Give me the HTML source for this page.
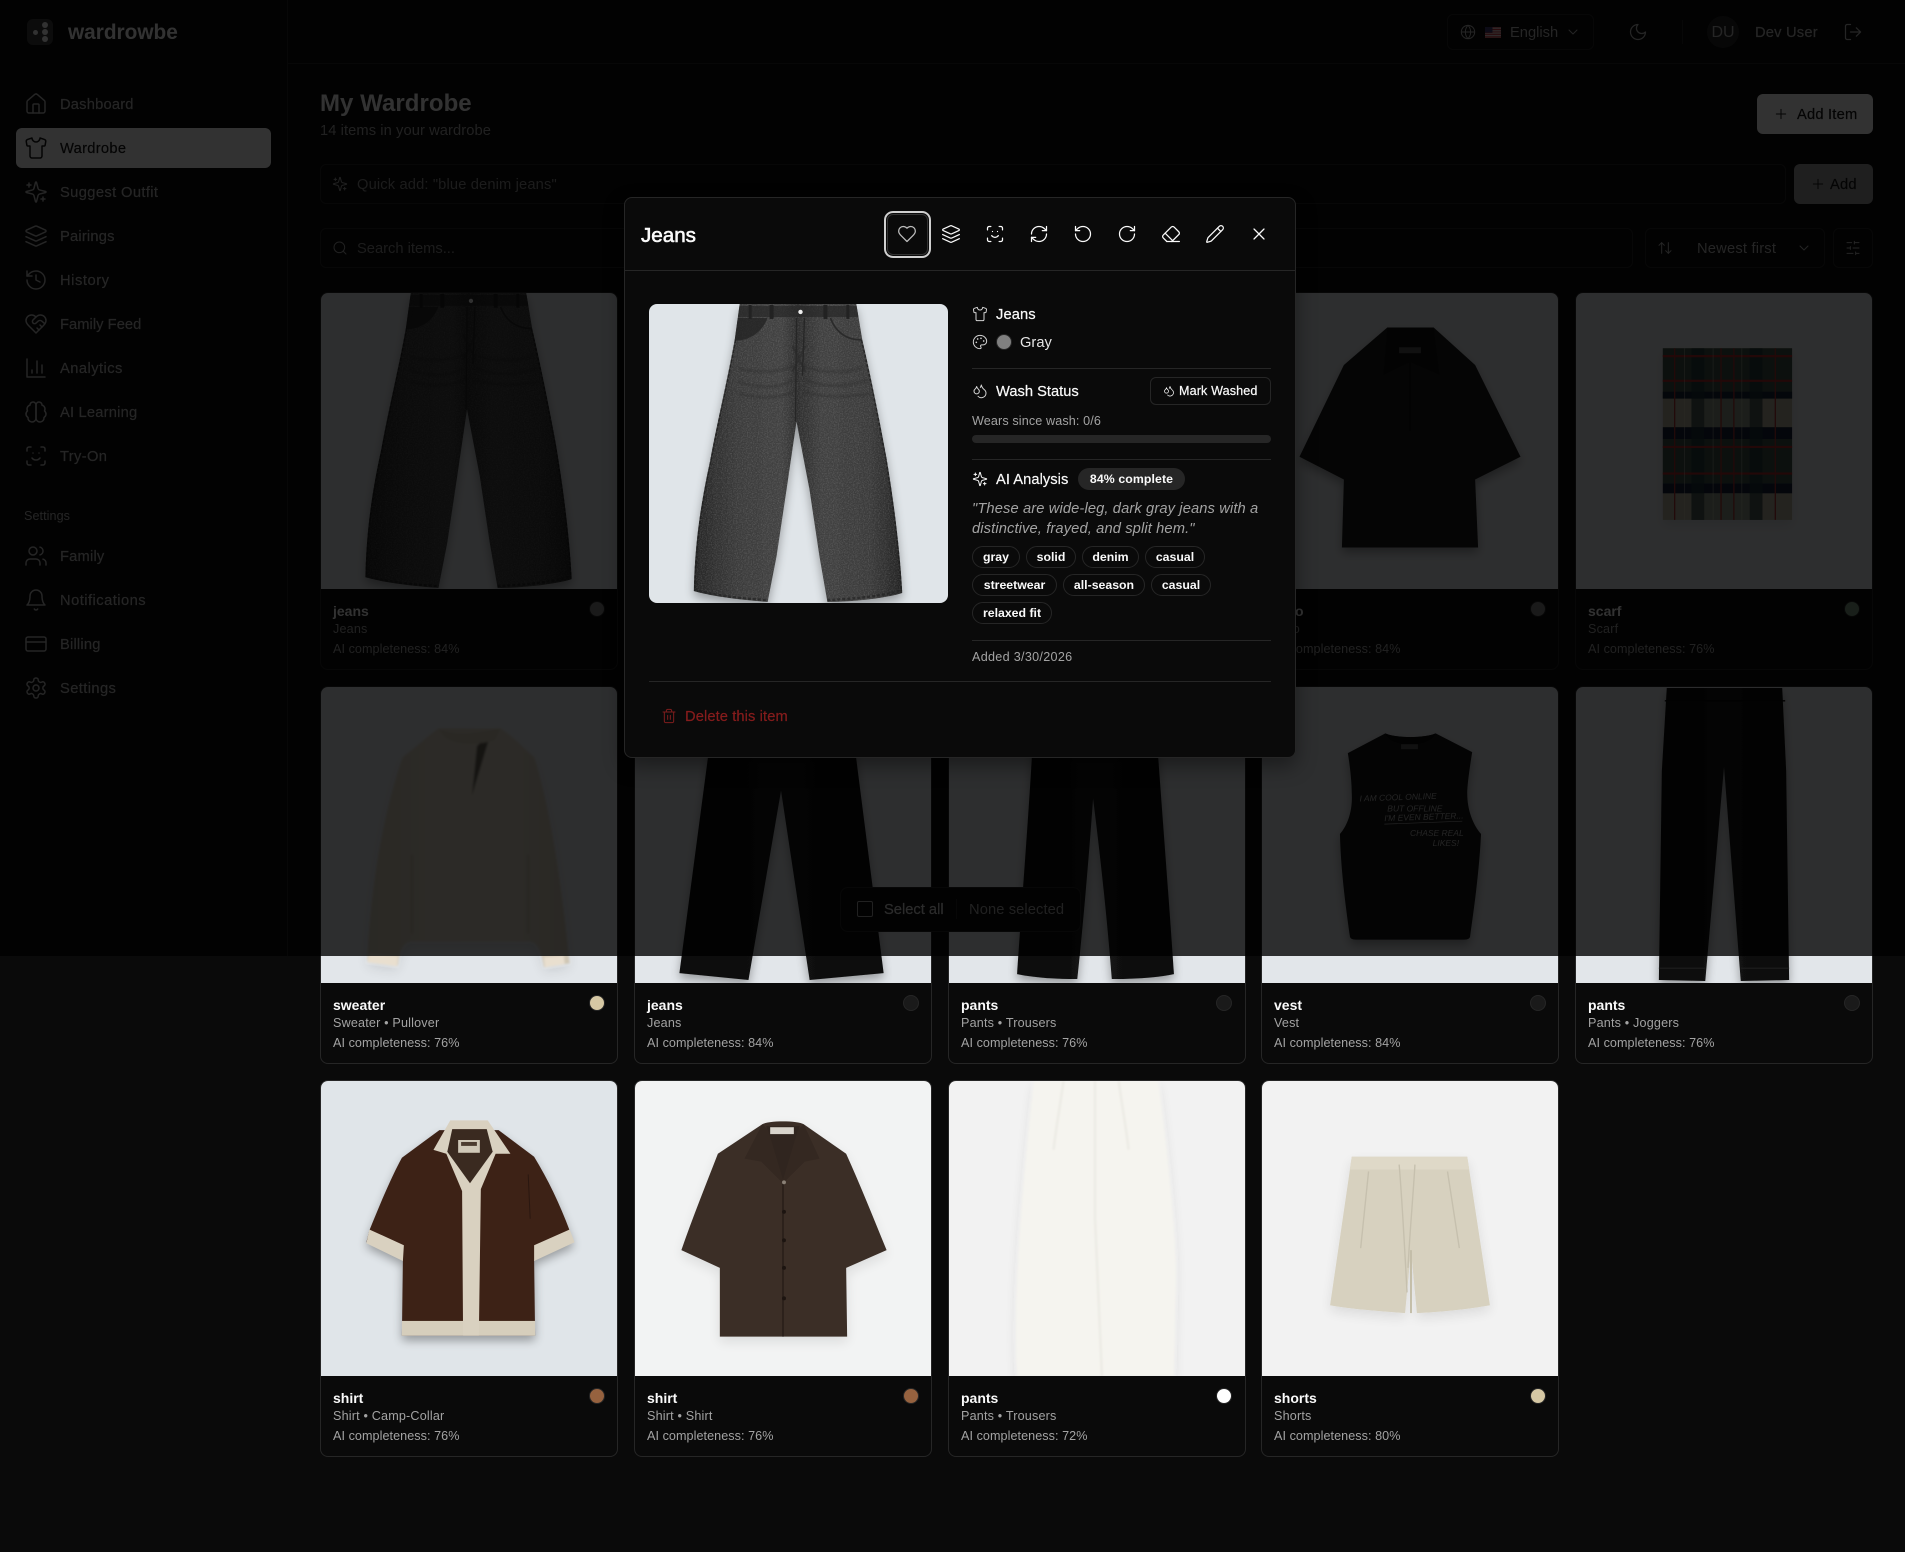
<!DOCTYPE html>
<html lang="en"><head><meta charset="utf-8"><title>wardrowbe</title>
<style>
html,body{margin:0;padding:0;background:#0a0a0a}
body{position:relative;width:1905px;height:1552px;overflow:hidden;font-family:"Liberation Sans",Arial,sans-serif;color:#fafafa}
div,span,svg.i{position:absolute;box-sizing:border-box}
.t{white-space:nowrap;line-height:20px;font-size:14.7px;margin-top:1px}
.s{white-space:nowrap;line-height:16px;font-size:12.6px;letter-spacing:.06px}
.m{-webkit-text-stroke:.2px currentColor}
svg.i{fill:none;stroke:currentColor;stroke-width:1.5;stroke-linecap:round;stroke-linejoin:round;overflow:visible}
.nav{color:#b8b8b8}
.box{border:1px solid #262626;border-radius:6px}
.card{border:1px solid #262626;border-radius:8px;width:298px;height:378px;background:#0a0a0a}
.img{position:absolute;left:0;top:0;width:296px;height:296px;border-radius:7px 7px 0 0;overflow:hidden}
.img svg{position:absolute;left:0;top:0;width:100%;height:100%}
.sw{width:16px;height:16px;border-radius:50%;border:1px solid #262626;left:268px;top:308px}
.n{font-weight:bold;font-size:14px;line-height:20px;white-space:nowrap;left:12px;top:308px;color:#fafafa}
.u{left:12px;top:328px;color:#a3a3a3;letter-spacing:.18px}.c{left:12px;top:348px;color:#a3a3a3}
.r3{height:377px}.r3 .n{top:307px}.r3 .u{top:327px}.r3 .c{top:347px}.r3 .sw{top:307px}
.tag{height:22px;border:1px solid #262626;border-radius:11px;font-weight:bold;font-size:12.3px;line-height:20px;text-align:center;white-space:nowrap;color:#fafafa}
</style></head><body>

<svg width="0" height="0" style="position:absolute"><defs>
<filter id="sh" x="-20%" y="-20%" width="140%" height="140%"><feGaussianBlur in="SourceAlpha" stdDeviation="5"/><feOffset dy="5"/><feComponentTransfer><feFuncA type="linear" slope=".33"/></feComponentTransfer><feMerge><feMergeNode/><feMergeNode in="SourceGraphic"/></feMerge></filter>
<filter id="shl" x="-20%" y="-20%" width="140%" height="140%"><feGaussianBlur in="SourceAlpha" stdDeviation="6"/><feOffset dy="5"/><feComponentTransfer><feFuncA type="linear" slope=".1"/></feComponentTransfer><feMerge><feMergeNode/><feMergeNode in="SourceGraphic"/></feMerge></filter>
<filter id="bl" x="-10%" y="-10%" width="120%" height="120%"><feGaussianBlur stdDeviation="1.1"/></filter>
<filter id="gr" x="0" y="0" width="100%" height="100%"><feTurbulence type="fractalNoise" baseFrequency=".8" numOctaves="2" seed="4"/><feColorMatrix values="0 0 0 0 1  0 0 0 0 1  0 0 0 0 1  0 0 0 1.6 -.62"/></filter>
<linearGradient id="jg" x1="0" x2="1" y1="0" y2="0"><stop offset="0" stop-color="#262626"/><stop offset=".2" stop-color="#3a3a3a"/><stop offset=".42" stop-color="#424242"/><stop offset=".5" stop-color="#2e2e2e"/><stop offset=".62" stop-color="#414141"/><stop offset=".85" stop-color="#3a3a3a"/><stop offset="1" stop-color="#242424"/></linearGradient>
<clipPath id="jc"><path d="M91,0 L208,0 L214,36 C222,70 232,120 238,153 C246,200 252,250 254,288 L254,290 C235,296 200,299 179,299 L171,253 L161,186 L148,118 L138,186 L128,253 L119,299 C95,297 65,294 45,288 C46,240 52,200 61,159 C68,120 78,80 86,36 Z"/></clipPath>
<linearGradient id="sg" x1="0" x2="1" y1="0" y2="0"><stop offset="0" stop-color="#d2c9b6"/><stop offset=".3" stop-color="#dad1c0"/><stop offset=".7" stop-color="#dcd3c3"/><stop offset="1" stop-color="#cfc6b4"/></linearGradient>
<linearGradient id="bk" x1="0" x2="1" y1="0" y2="0"><stop offset="0" stop-color="#0b0b0b"/><stop offset=".5" stop-color="#141414"/><stop offset="1" stop-color="#0b0b0b"/></linearGradient>

<symbol id="g-jeans" viewBox="0 0 300 300" preserveAspectRatio="none">
<g filter="url(#sh)"><path d="M91,0 L208,0 L214,36 C222,70 232,120 238,153 C246,200 252,250 254,288 L254,290 C235,296 200,299 179,299 L171,253 L161,186 L148,118 L138,186 L128,253 L119,299 C95,297 65,294 45,288 C46,240 52,200 61,159 C68,120 78,80 86,36 Z" fill="url(#jg)"/></g>
<g clip-path="url(#jc)">
<rect width="300" height="300" filter="url(#gr)" opacity=".2"/>
<path d="M88,2h122v11H86z" fill="#262626" opacity=".7"/>
<path d="M86,36 C98,36 112,30 118,14 L88,14 Z" fill="#222" opacity=".75"/>
<path d="M86,36 C98,36 112,30 118,14 M213,36 C200,36 188,30 182,14" stroke="#2a2a2a" stroke-width="1.6" fill="none"/>
<path d="M148,14 L147,118 M156,14 L154,72" stroke="#262626" stroke-width="1.3" fill="none"/>
<path d="M144,42 L157,68 M157,42 L144,68" stroke="#2a2a2a" stroke-width="2" fill="none" opacity=".6"/>
<path d="M90,65 C115,70 130,68 146,62 M90,78 C115,86 130,84 146,76 M90,90 C115,96 130,94 146,88 M154,62 C175,70 195,70 214,64 M156,76 C175,84 195,84 220,76 M156,88 C175,94 195,94 222,90" stroke="#2c2c2c" stroke-width="2.4" fill="none" opacity=".4" filter="url(#bl)"/>
<path d="M86,36 C78,80 68,120 61,159 C52,200 46,240 45,288" stroke="#1c1c1c" stroke-width="3.2" fill="none" stroke-dasharray="3 2" opacity=".7"/>
<path d="M214,36 C222,70 232,120 238,153 C246,200 252,250 254,288" stroke="#1c1c1c" stroke-width="3.2" fill="none" stroke-dasharray="3 2" opacity=".7"/>
<path d="M45,287 C70,293 95,296 120,297 M179,297 C205,296 235,293 254,287" stroke="#242424" stroke-width="2.4" fill="none" stroke-dasharray="3 2" opacity=".7"/>
<rect x="121" y="1" width="4" height="14" fill="#222"/><rect x="175" y="1" width="4" height="14" fill="#222"/><rect x="100" y="1" width="3" height="14" fill="#222"/><rect x="198" y="1" width="3" height="14" fill="#222"/>
<circle cx="152" cy="8" r="2.2" fill="#eee"/>
</g></symbol>

<symbol id="g-sweater" viewBox="0 0 300 300" preserveAspectRatio="none"><g filter="url(#bl)">
<g filter="url(#shl)"><path d="M119,42 L182,42 C195,50 205,62 216,71 C232,120 244,200 252,280 L226,284 C222,260 216,258 210,258 L92,258 C86,258 80,262 78,282 L47,278 C50,200 65,120 83,71 C95,62 108,50 119,42 Z" fill="url(#sg)"/>
<path d="M49,270 L78,273 L77,283 L47,279 Z M226,274 L246,272 L247,281 L227,284 Z" fill="#e9dfcf"/></g>
<path d="M92,170 L92,250 M210,170 L210,250" stroke="#c6bdaa" stroke-width="2.5"/>
<path d="M158,60 L173,44 L153,110 Z" fill="#6a6358"/><path d="M119,42 C135,50 150,48 182,42 L176,54 C155,60 135,58 125,50 Z" fill="#cfc6b3"/></g></symbol>

<symbol id="g-jblack" viewBox="0 0 300 300" preserveAspectRatio="none"><g filter="url(#sh)"><path d="M92,0 L208,0 L224,71 L252,290 L177,297 L148,105 L115,297 L45,290 L74,71 Z" fill="url(#bk)"/></g></symbol>

<symbol id="g-pblack" viewBox="0 0 300 300" preserveAspectRatio="none"><g filter="url(#sh)"><path d="M92,0 L208,0 C210,40 212,60 212,71 C217,140 224,230 228,291 C210,295 185,296 165,296 C160,230 152,160 146,113 C142,170 136,240 130,296 C110,296 88,295 69,291 C73,230 80,140 84,71 C84,60 88,30 92,0 Z" fill="url(#bk)"/></g></symbol>

<symbol id="g-vest" viewBox="0 0 300 300" preserveAspectRatio="none"><g filter="url(#sh)"><path d="M125,47 C135,52 165,52 176,47 L213,66 C210,85 208,100 208,108 C208,125 214,140 222,149 C220,190 214,230 211,252 Q211,256 205,256 L95,256 Q89,256 89,252 C86,230 80,190 79,149 C87,140 92,125 91,108 C91,100 90,85 87,67 Z" fill="#141414"/></g>
<path d="M125,47 C130,62 170,62 176,47 C166,52 135,52 125,47Z" fill="#0a0a0a"/><rect x="141" y="58" width="17" height="5" fill="#555"/>
<g font-family="Liberation Sans,sans-serif" font-style="italic" font-size="8.6" fill="#b4b4b4"><text x="99" y="116" transform="rotate(-2 99 116)">I AM COOL ONLINE</text><text x="127" y="126">BUT OFFLINE</text><text x="124" y="136" transform="rotate(-2 124 136)">I'M EVEN BETTER...</text><text x="150" y="151">CHASE REAL</text><text x="173" y="161">LIKES!</text></g><path d="M124,139L203,136" stroke="#aaa" stroke-width=".7"/></symbol>

<symbol id="g-jog" viewBox="0 0 300 300" preserveAspectRatio="none"><g filter="url(#sh)"><path d="M92,1 L209,1 L213,85 L216,297 L167,298 L150,81 L131,298 L84,297 L87,85 Z" fill="url(#bk)"/></g><path d="M90,14H212" stroke="#050505" stroke-width="1.5"/><path d="M84,285L131,285M167,285L216,285" stroke="#1e1e1e" stroke-width="1.2"/></symbol>

<symbol id="g-polo" viewBox="0 0 300 300" preserveAspectRatio="none"><g filter="url(#sh)"><path d="M127,35 L174,35 L216,73 L262,166 L216,189 L219,258 L81,258 L83,189 L38,166 L83,73 Z" fill="#1a1a1a"/></g><path d="M127,35 L174,35 L180,83 L150,70 L123,83 Z" fill="#131313"/><rect x="139" y="55" width="22" height="6" fill="#555"/><path d="M150,70V140" stroke="#0a0a0a"/></symbol>

<symbol id="g-scarf" viewBox="0 0 300 300" preserveAspectRatio="none"><g filter="url(#shl)"><rect x="88" y="56" width="131" height="174" fill="#b4b09a"/></g>
<rect x="88" y="56" width="131" height="51" fill="#3c5349"/><rect x="88" y="148" width="131" height="45" fill="#3c5349"/>
<rect x="88" y="136" width="131" height="12" fill="#16213a"/><rect x="88" y="193" width="131" height="10" fill="#16213a"/><rect x="88" y="100" width="131" height="7" fill="#18253a"/>
<rect x="130" y="107" width="46" height="29" fill="#6f8378" opacity=".55"/><rect x="130" y="203" width="46" height="27" fill="#6f8378" opacity=".55"/>
<rect x="117" y="56" width="13" height="174" fill="#1c3438" opacity=".7"/><rect x="176" y="56" width="13" height="174" fill="#1c3438" opacity=".7"/>
<path d="M88,64H219M88,89H219M88,156H219M88,183H219" stroke="#b12c2c" stroke-width="2.2"/><path d="M100,56V230M147,56V230M160,56V230M202,56V230" stroke="#a83030" stroke-width="1.3"/><path d="M110,56V230M139,56V230M168,56V230" stroke="#d8d4bc" stroke-width="1" opacity=".4"/></symbol>

<symbol id="g-shirt1" viewBox="0 0 300 300" preserveAspectRatio="none"><g filter="url(#sh)"><path d="M120,50 L82,78 C70,100 58,130 49,152 L46,164 L83,182 L82,259 L217,259 L216,182 L256,164 L252,152 C242,125 230,100 216,77 L180,50 Z" fill="#3d2219"/></g>
<path d="M49,151 L84,167 L83,183 L46,165 Z M252,151 L216,167 L216,183 L257,164 Z" fill="#d9d1c0"/><rect x="82" y="244" width="135" height="15" fill="#d6cebc"/>
<path d="M131,40 L169,40 L192,74 L177,74 L162,110 L160,259 L144,259 L143,112 L127,74 L114,70 Z" fill="#d9d1c0"/>
<path d="M133,49 L168,49 L174,72 L151,104 L128,72 Z" fill="#3a2a20"/><rect x="139" y="60" width="22" height="13" fill="#cfc8b8"/><rect x="142" y="62" width="16" height="4" fill="#4b3c30"/>
<path d="M210,95 L212,140" stroke="#2a1710"/></symbol>

<symbol id="g-shirt2" viewBox="0 0 300 300" preserveAspectRatio="none"><g filter="url(#shl)"><path d="M129,44 C135,40 165,40 171,44 L214,74 C228,105 242,140 255,172 L214,190 L215,260 L86,260 L86,190 L47,172 C58,140 72,105 84,74 Z" fill="#3a2d26"/></g>
<path d="M133,46 L167,46 L150,104 Z" fill="#30251f"/><path d="M129,44 L111,79 L128,82 L150,104 L172,82 L187,79 L171,44 L165,50 L150,100 L135,50 Z" fill="#342821"/><rect x="137" y="47" width="24" height="7" fill="#d8d4cc"/>
<path d="M150,104V260" stroke="#271d18" stroke-width="1.5"/><g fill="#1c1410"><circle cx="151" cy="133" r="2"/><circle cx="151" cy="162" r="2"/><circle cx="151" cy="190" r="2"/><circle cx="151" cy="221" r="2"/></g><circle cx="151" cy="103" r="2" fill="#8a8076"/></symbol>

<symbol id="g-wpants" viewBox="0 0 300 300" preserveAspectRatio="none"><g filter="url(#bl)"><g filter="url(#shl)"><path d="M86,0 L212,0 C220,60 230,150 230,200 L228,300 L69,300 C64,220 75,100 86,0 Z" fill="#f5f4ef"/></g>
<path d="M116,0 C112,30 108,50 106,70 M148,0 L148,140 L155,300 M172,0 C176,30 180,50 182,70" stroke="#e9e7e0" stroke-width="1.8" fill="none"/></g></symbol>

<symbol id="g-shorts" viewBox="0 0 300 300" preserveAspectRatio="none"><g filter="url(#shl)"><path d="M91,77 L208,77 L231,228 C210,232 180,235 157,236 L151,172 L145,236 C120,234 90,232 69,228 Z" fill="#d7d1bf"/></g>
<path d="M91,77H208L210,90H89Z" fill="#dfd9c8"/><path d="M139,85 C142,120 144,160 147,215 M155,85 C153,120 150,150 148,190 M108,92 L100,170 M188,92 L200,170" stroke="#c6c0ae" stroke-width="1.4" fill="none"/><path d="M151,172V236" stroke="#c4bea9" stroke-width="2"/></symbol>

<symbol id="home" viewBox="0 0 24 24"><path d="M15 21v-8a1 1 0 0 0-1-1h-4a1 1 0 0 0-1 1v8"/><path d="M3 10a2 2 0 0 1 .709-1.528l7-5.999a2 2 0 0 1 2.582 0l7 5.999A2 2 0 0 1 21 10v9a2 2 0 0 1-2 2H5a2 2 0 0 1-2-2z"/></symbol>
<symbol id="shirt" viewBox="0 0 24 24"><path d="M20.38 3.46 16 2a4 4 0 0 1-8 0L3.62 3.46a2 2 0 0 0-1.34 2.23l.58 3.47a1 1 0 0 0 .99.84H6v10c0 1.1.9 2 2 2h8a2 2 0 0 0 2-2V10h2.15a1 1 0 0 0 .99-.84l.58-3.47a2 2 0 0 0-1.34-2.23z"/></symbol>
<symbol id="spark" viewBox="0 0 24 24"><path d="M9.937 15.5A2 2 0 0 0 8.5 14.063l-6.135-1.582a.5.5 0 0 1 0-.962L8.5 9.936A2 2 0 0 0 9.937 8.5l1.582-6.135a.5.5 0 0 1 .963 0L14.063 8.5A2 2 0 0 0 15.5 9.937l6.135 1.581a.5.5 0 0 1 0 .964L15.5 14.063a2 2 0 0 0-1.437 1.437l-1.582 6.135a.5.5 0 0 1-.963 0z"/><path d="M5 3v4M3 5h4M19 17v4M17 19h4"/></symbol>
<symbol id="layers" viewBox="0 0 24 24"><path d="m12.83 2.18a2 2 0 0 0-1.66 0L2.6 6.08a1 1 0 0 0 0 1.83l8.58 3.91a2 2 0 0 0 1.66 0l8.58-3.9a1 1 0 0 0 0-1.83Z"/><path d="m22 17.65-9.17 4.16a2 2 0 0 1-1.66 0L2 17.65"/><path d="m22 12.65-9.17 4.16a2 2 0 0 1-1.66 0L2 12.65"/></symbol>
<symbol id="hist" viewBox="0 0 24 24"><path d="M3 12a9 9 0 1 0 9-9 9.75 9.75 0 0 0-6.74 2.74L3 8"/><path d="M3 3v5h5"/><path d="M12 7v5l4 2"/></symbol>
<symbol id="hh" viewBox="0 0 24 24"><path d="M19 14c1.49-1.46 3-3.21 3-5.5A5.5 5.5 0 0 0 16.5 3c-1.76 0-3 .5-4.5 2-1.5-1.5-2.74-2-4.5-2A5.5 5.5 0 0 0 2 8.5c0 2.3 1.5 4.05 3 5.5l7 7Z"/><path d="M12 5 9.04 7.96a2.17 2.17 0 0 0 0 3.08c.82.82 2.13.85 3 .07l2.07-1.9a2.82 2.82 0 0 1 3.79 0l2.96 2.66"/><path d="m18 15-2-2"/><path d="m15 18-2-2"/></symbol>
<symbol id="chart" viewBox="0 0 24 24"><path d="M3 3v18h18"/><path d="M18 17V9"/><path d="M13 17V5"/><path d="M8 17v-3"/></symbol>
<symbol id="brain" viewBox="0 0 24 24"><path d="M12 5a3 3 0 1 0-5.997.125 4 4 0 0 0-2.526 5.77 4 4 0 0 0 .556 6.588A4 4 0 1 0 12 18Z"/><path d="M12 5a3 3 0 1 1 5.997.125 4 4 0 0 1 2.526 5.77 4 4 0 0 1-.556 6.588A4 4 0 1 1 12 18Z"/></symbol>
<symbol id="scan" viewBox="0 0 24 24"><path d="M3 7V5a2 2 0 0 1 2-2h2"/><path d="M17 3h2a2 2 0 0 1 2 2v2"/><path d="M21 17v2a2 2 0 0 1-2 2h-2"/><path d="M7 21H5a2 2 0 0 1-2-2v-2"/><path d="M8 14s1.5 2 4 2 4-2 4-2"/><path d="M9 9h.01"/><path d="M15 9h.01"/></symbol>
<symbol id="users" viewBox="0 0 24 24"><path d="M16 21v-2a4 4 0 0 0-4-4H6a4 4 0 0 0-4 4v2"/><circle cx="9" cy="7" r="4"/><path d="M22 21v-2a4 4 0 0 0-3-3.87"/><path d="M16 3.13a4 4 0 0 1 0 7.75"/></symbol>
<symbol id="bell" viewBox="0 0 24 24"><path d="M6 8a6 6 0 0 1 12 0c0 7 3 9 3 9H3s3-2 3-9"/><path d="M10.3 21a1.94 1.94 0 0 0 3.4 0"/></symbol>
<symbol id="cc" viewBox="0 0 24 24"><rect width="20" height="14" x="2" y="5" rx="2"/><line x1="2" x2="22" y1="10" y2="10"/></symbol>
<symbol id="gear" viewBox="0 0 24 24"><path d="M12.22 2h-.44a2 2 0 0 0-2 2v.18a2 2 0 0 1-1 1.73l-.43.25a2 2 0 0 1-2 0l-.15-.08a2 2 0 0 0-2.73.73l-.22.38a2 2 0 0 0 .73 2.73l.15.1a2 2 0 0 1 1 1.72v.51a2 2 0 0 1-1 1.74l-.15.09a2 2 0 0 0-.73 2.73l.22.38a2 2 0 0 0 2.73.73l.15-.08a2 2 0 0 1 2 0l.43.25a2 2 0 0 1 1 1.73V20a2 2 0 0 0 2 2h.44a2 2 0 0 0 2-2v-.18a2 2 0 0 1 1-1.73l.43-.25a2 2 0 0 1 2 0l.15.08a2 2 0 0 0 2.73-.73l.22-.39a2 2 0 0 0-.73-2.73l-.15-.08a2 2 0 0 1-1-1.74v-.5a2 2 0 0 1 1-1.74l.15-.09a2 2 0 0 0 .73-2.73l-.22-.38a2 2 0 0 0-2.73-.73l-.15.08a2 2 0 0 1-2 0l-.43-.25a2 2 0 0 1-1-1.73V4a2 2 0 0 0-2-2z"/><circle cx="12" cy="12" r="3"/></symbol>
<symbol id="refresh" viewBox="0 0 24 24"><path d="M3 12a9 9 0 0 1 9-9 9.75 9.75 0 0 1 6.74 2.74L21 8"/><path d="M21 3v5h-5"/><path d="M21 12a9 9 0 0 1-9 9 9.75 9.75 0 0 1-6.74-2.74L3 16"/><path d="M8 16H3v5"/></symbol>
<symbol id="ccw" viewBox="0 0 24 24"><path d="M3 12a9 9 0 1 0 9-9 9.75 9.75 0 0 0-6.74 2.74L3 8"/><path d="M3 3v5h5"/></symbol>
<symbol id="cw" viewBox="0 0 24 24"><path d="M21 12a9 9 0 1 1-9-9c2.52 0 4.93 1 6.74 2.74L21 8"/><path d="M21 3v5h-5"/></symbol>
<symbol id="eraser" viewBox="0 0 24 24"><path d="m7 21-4.3-4.3c-1-1-1-2.5 0-3.4l9.6-9.6c1-1 2.5-1 3.4 0l5.6 5.6c1 1 1 2.5 0 3.4L13 21"/><path d="M22 21H7"/><path d="m5 11 9 9"/></symbol>
<symbol id="pencil" viewBox="0 0 24 24"><path d="M21.174 6.812a1 1 0 0 0-3.986-3.987L3.842 16.174a2 2 0 0 0-.5.83l-1.321 4.352a.5.5 0 0 0 .623.622l4.353-1.32a2 2 0 0 0 .83-.497z"/><path d="m15 5 4 4"/></symbol>
<symbol id="x" viewBox="0 0 24 24"><path d="M18 6 6 18M6 6l12 12"/></symbol>
<symbol id="heart" viewBox="0 0 24 24"><path d="M19 14c1.49-1.46 3-3.21 3-5.5A5.5 5.5 0 0 0 16.5 3c-1.76 0-3 .5-4.5 2-1.5-1.5-2.74-2-4.5-2A5.5 5.5 0 0 0 2 8.5c0 2.3 1.5 4.05 3 5.5l7 7Z"/></symbol>
<symbol id="palette" viewBox="0 0 24 24"><circle cx="13.5" cy="6.5" r=".5" fill="currentColor"/><circle cx="17.5" cy="10.5" r=".5" fill="currentColor"/><circle cx="8.5" cy="7.5" r=".5" fill="currentColor"/><circle cx="6.5" cy="12.5" r=".5" fill="currentColor"/><path d="M12 2C6.5 2 2 6.5 2 12s4.5 10 10 10c.926 0 1.648-.746 1.648-1.688 0-.437-.18-.835-.437-1.125-.29-.289-.438-.652-.438-1.125a1.64 1.64 0 0 1 1.668-1.668h1.996c3.051 0 5.555-2.503 5.555-5.554C21.965 6.012 17.461 2 12 2z"/></symbol>
<symbol id="drops" viewBox="0 0 24 24"><path d="M7 16.3c2.2 0 4-1.83 4-4.05 0-1.16-.57-2.26-1.71-3.19S7.29 6.75 7 5.3c-.29 1.45-1.14 2.84-2.29 3.76S3 11.1 3 12.25c0 2.22 1.8 4.05 4 4.05z"/><path d="M12.56 6.6A10.97 10.97 0 0 0 14 3.02c.5 2.5 2 4.9 4 6.5s3 3.5 3 5.5a6.98 6.98 0 0 1-11.91 4.97"/></symbol>
<symbol id="globe" viewBox="0 0 24 24"><circle cx="12" cy="12" r="10"/><path d="M12 2a14.5 14.5 0 0 0 0 20 14.5 14.5 0 0 0 0-20"/><path d="M2 12h20"/></symbol>
<symbol id="moon" viewBox="0 0 24 24"><path d="M12 3a6 6 0 0 0 9 9 9 9 0 1 1-9-9Z"/></symbol>
<symbol id="logout" viewBox="0 0 24 24"><path d="M9 21H5a2 2 0 0 1-2-2V5a2 2 0 0 1 2-2h4"/><polyline points="16 17 21 12 16 7"/><line x1="21" x2="9" y1="12" y2="12"/></symbol>
<symbol id="plus" viewBox="0 0 24 24"><path d="M5 12h14M12 5v14"/></symbol>
<symbol id="search" viewBox="0 0 24 24"><circle cx="11" cy="11" r="8"/><path d="m21 21-4.3-4.3"/></symbol>
<symbol id="sort" viewBox="0 0 24 24"><path d="m21 16-4 4-4-4"/><path d="M17 20V4"/><path d="m3 8 4-4 4 4"/><path d="M7 4v16"/></symbol>
<symbol id="chev" viewBox="0 0 24 24"><path d="m6 9 6 6 6-6"/></symbol>
<symbol id="sliders" viewBox="0 0 24 24"><path d="M21 4h-7M10 4H3M21 12h-9M8 12H3M21 20h-5M12 20H3M14 2v4M8 10v4M16 18v4"/></symbol>
<symbol id="trash" viewBox="0 0 24 24"><path d="M3 6h18"/><path d="M19 6v14c0 1-1 2-2 2H7c-1 0-2-1-2-2V6"/><path d="M8 6V4c0-1 1-2 2-2h4c1 0 2 1 2 2v2"/><line x1="10" x2="10" y1="11" y2="17"/><line x1="14" x2="14" y1="11" y2="17"/></symbol>
</defs></svg>

<!-- sidebar -->
<div style="left:0;top:0;width:288px;height:956px;border-right:1px solid #262626"></div>
<div style="left:288px;top:0;width:1617px;height:64px;border-bottom:1px solid #262626"></div>
<div style="left:27px;top:19px;width:26px;height:26px;border-radius:6px;background:#3c3c3c"></div>
<div style="left:32.5px;top:29.5px;width:5px;height:5px;border-radius:50%;background:#fafafa"></div>
<div style="left:41.5px;top:22px;width:6px;height:6px;border-radius:50%;background:#fafafa"></div>
<div style="left:41.5px;top:29px;width:6px;height:6px;border-radius:50%;background:#fafafa"></div>
<div style="left:41.5px;top:36px;width:6px;height:6px;border-radius:50%;background:#fafafa"></div>
<div class="t" style="left:68px;top:20px;line-height:24px;font-size:20.8px;font-weight:bold;color:#fafafa">wardrowbe</div>

<div style="left:16px;top:128px;width:255px;height:40px;border-radius:6px;background:#fafafa"></div>
<svg class="i nav" style="left:24px;top:92px" width="24" height="24"><use href="#home"/></svg><div class="t m nav" style="left:60px;top:94px;letter-spacing:.2px">Dashboard</div>
<svg class="i" style="left:24px;top:136px;color:#171717" width="24" height="24"><use href="#shirt"/></svg><div class="t m" style="left:60px;top:138px;letter-spacing:.3px;color:#171717">Wardrobe</div>
<svg class="i nav" style="left:24px;top:180px" width="24" height="24"><use href="#spark"/></svg><div class="t m nav" style="left:60px;top:182px;letter-spacing:.38px">Suggest Outfit</div>
<svg class="i nav" style="left:24px;top:224px" width="24" height="24"><use href="#layers"/></svg><div class="t m nav" style="left:60px;top:226px;letter-spacing:.2px">Pairings</div>
<svg class="i nav" style="left:24px;top:268px" width="24" height="24"><use href="#hist"/></svg><div class="t m nav" style="left:60px;top:270px;letter-spacing:.55px">History</div>
<svg class="i nav" style="left:24px;top:312px" width="24" height="24"><use href="#hh"/></svg><div class="t m nav" style="left:60px;top:314px;letter-spacing:.05px">Family Feed</div>
<svg class="i nav" style="left:24px;top:356px" width="24" height="24"><use href="#chart"/></svg><div class="t m nav" style="left:60px;top:358px;letter-spacing:.45px">Analytics</div>
<svg class="i nav" style="left:24px;top:400px" width="24" height="24"><use href="#brain"/></svg><div class="t m nav" style="left:60px;top:402px;letter-spacing:.2px">AI Learning</div>
<svg class="i nav" style="left:24px;top:444px" width="24" height="24"><use href="#scan"/></svg><div class="t m nav" style="left:60px;top:446px;letter-spacing:.35px">Try-On</div>
<div class="s nav" style="left:24px;top:508px">Settings</div>
<svg class="i nav" style="left:24px;top:544px" width="24" height="24"><use href="#users"/></svg><div class="t m nav" style="left:60px;top:546px;letter-spacing:.2px">Family</div>
<svg class="i nav" style="left:24px;top:588px" width="24" height="24"><use href="#bell"/></svg><div class="t m nav" style="left:60px;top:590px;letter-spacing:.47px">Notifications</div>
<svg class="i nav" style="left:24px;top:632px" width="24" height="24"><use href="#cc"/></svg><div class="t m nav" style="left:60px;top:634px;letter-spacing:.2px">Billing</div>
<svg class="i nav" style="left:24px;top:676px" width="24" height="24"><use href="#gear"/></svg><div class="t m nav" style="left:60px;top:678px;letter-spacing:.4px">Settings</div>

<!-- topbar -->
<div class="box" style="left:1447px;top:14px;width:147px;height:36px"></div>
<svg class="i nav" style="left:1460px;top:24px" width="16" height="16"><use href="#globe"/></svg>
<svg style="position:absolute;left:1485px;top:27px" width="16" height="11" viewBox="0 0 16 11"><rect width="16" height="11" fill="#eee"/><path d="M0 .8h16M0 2.5h16M0 4.2h16M0 5.9h16M0 7.6h16M0 9.3h16M0 10.7h16" stroke="#c8343c" stroke-width=".9"/><rect width="7.5" height="5.6" fill="#3c3b6e"/></svg>
<div class="t nav" style="left:1510px;top:22px;letter-spacing:0">English</div>
<svg class="i nav" style="left:1565px;top:24px" width="16" height="16"><use href="#chev"/></svg>
<svg class="i nav" style="left:1628px;top:22px" width="20" height="20"><use href="#moon"/></svg>
<div style="left:1682px;top:20px;width:1px;height:24px;background:#262626"></div>
<div style="left:1707px;top:16px;width:32px;height:32px;border-radius:50%;background:#262626"></div>
<div class="t nav" style="left:1707px;top:22px;width:32px;text-align:center;font-size:16px">DU</div>
<div class="t m nav" style="left:1755px;top:22px;letter-spacing:.2px">Dev User</div>
<svg class="i nav" style="left:1843px;top:22px" width="20" height="20"><use href="#logout"/></svg>

<!-- page header -->
<div class="t" style="left:320px;top:88px;line-height:30px;font-size:24px;font-weight:bold;color:#fafafa;letter-spacing:.05px">My Wardrobe</div>
<div class="t" style="left:320px;top:120px;color:#a3a3a3;letter-spacing:.08px">14 items in your wardrobe</div>
<div style="left:1757px;top:94px;width:116px;height:40px;border-radius:6px;background:#fafafa"></div>
<svg class="i" style="left:1773px;top:106px;color:#171717" width="16" height="16"><use href="#plus"/></svg>
<div class="t m" style="left:1797px;top:104px;color:#171717;letter-spacing:.2px">Add Item</div>

<div class="box" style="left:320px;top:164px;width:1466px;height:40px"></div>
<svg class="i" style="left:332px;top:176px;color:#a3a3a3" width="16" height="16"><use href="#spark"/></svg>
<div class="t" style="left:357px;top:174px;color:#8a8a8a;letter-spacing:.14px">Quick add: "blue denim jeans"</div>
<div style="left:1794px;top:164px;width:79px;height:40px;border-radius:6px;background:#9c9c9c"></div>
<svg class="i" style="left:1810px;top:176px;color:#171717" width="16" height="16"><use href="#plus"/></svg>
<div class="t m" style="left:1830px;top:174px;color:#171717;letter-spacing:.2px">Add</div>

<div class="box" style="left:320px;top:228px;width:1313px;height:40px"></div>
<svg class="i" style="left:332px;top:240px;color:#a3a3a3" width="16" height="16"><use href="#search"/></svg>
<div class="t" style="left:357px;top:238px;color:#8a8a8a">Search items...</div>
<div class="box" style="left:1645px;top:228px;width:180px;height:40px"></div>
<svg class="i nav" style="left:1657px;top:240px" width="16" height="16"><use href="#sort"/></svg>
<div class="t nav" style="left:1697px;top:238px;letter-spacing:.2px">Newest first</div>
<svg class="i nav" style="left:1796px;top:240px" width="16" height="16"><use href="#chev"/></svg>
<div class="box" style="left:1833px;top:228px;width:40px;height:40px"></div>
<svg class="i nav" style="left:1845px;top:240px" width="16" height="16"><use href="#sliders"/></svg>

<!-- Row 1 -->
<div class="card" style="left:320px;top:292px"><div class="img" style="background:#e2e6ea"><svg><use href="#g-jeans"/></svg></div><div class="sw" style="background:#808080"></div><div class="n">jeans</div><div class="s u">Jeans</div><div class="s c">AI completeness: 84%</div></div>
<div class="card" style="left:1261px;top:292px"><div class="img" style="background:#e2e6ea"><svg><use href="#g-polo"/></svg></div><div class="sw" style="background:#808080"></div><div class="n">polo</div><div class="s u">Polo</div><div class="s c">AI completeness: 84%</div></div>
<div class="card" style="left:1575px;top:292px"><div class="img" style="background:#e2e6ea"><svg><use href="#g-scarf"/></svg></div><div class="sw" style="background:#7d9a80"></div><div class="n">scarf</div><div class="s u">Scarf</div><div class="s c">AI completeness: 76%</div></div>

<!-- Row 2 -->
<div class="card" style="left:320px;top:686px"><div class="img" style="background:#e2e6ea"><svg><use href="#g-sweater"/></svg></div><div class="sw" style="background:#d6c8a4"></div><div class="n">sweater</div><div class="s u">Sweater • Pullover</div><div class="s c">AI completeness: 76%</div></div>
<div class="card" style="left:634px;top:686px"><div class="img" style="background:#e2e6ea"><svg><use href="#g-jblack"/></svg></div><div class="sw" style="background:#1a1a1a"></div><div class="n">jeans</div><div class="s u">Jeans</div><div class="s c">AI completeness: 84%</div></div>
<div class="card" style="left:948px;top:686px"><div class="img" style="background:#e2e6ea"><svg><use href="#g-pblack"/></svg></div><div class="sw" style="left:267px;background:#1a1a1a"></div><div class="n">pants</div><div class="s u">Pants • Trousers</div><div class="s c">AI completeness: 76%</div></div>
<div class="card" style="left:1261px;top:686px"><div class="img" style="background:#e2e6ea"><svg><use href="#g-vest"/></svg></div><div class="sw" style="background:#1a1a1a"></div><div class="n">vest</div><div class="s u">Vest</div><div class="s c">AI completeness: 84%</div></div>
<div class="card" style="left:1575px;top:686px"><div class="img" style="background:#e2e6ea"><svg><use href="#g-jog"/></svg></div><div class="sw" style="background:#1a1a1a"></div><div class="n">pants</div><div class="s u">Pants • Joggers</div><div class="s c">AI completeness: 76%</div></div>

<!-- Row 3 -->
<div class="card r3" style="left:320px;top:1080px"><div class="img" style="background:#e0e5e9;height:295px"><svg><use href="#g-shirt1"/></svg></div><div class="sw" style="background:#96623f"></div><div class="n">shirt</div><div class="s u">Shirt • Camp-Collar</div><div class="s c">AI completeness: 76%</div></div>
<div class="card r3" style="left:634px;top:1080px"><div class="img" style="background:#f2f3f3;height:295px"><svg><use href="#g-shirt2"/></svg></div><div class="sw" style="background:#96623f"></div><div class="n">shirt</div><div class="s u">Shirt • Shirt</div><div class="s c">AI completeness: 76%</div></div>
<div class="card r3" style="left:948px;top:1080px"><div class="img" style="background:#f2f2f2;height:295px"><svg><use href="#g-wpants"/></svg></div><div class="sw" style="left:267px;background:#fff"></div><div class="n">pants</div><div class="s u">Pants • Trousers</div><div class="s c">AI completeness: 72%</div></div>
<div class="card r3" style="left:1261px;top:1080px"><div class="img" style="background:#f2f2f2;height:295px"><svg><use href="#g-shorts"/></svg></div><div class="sw" style="background:#d6c8a4"></div><div class="n">shorts</div><div class="s u">Shorts</div><div class="s c">AI completeness: 80%</div></div>

<!-- selection bar -->
<div style="left:840px;top:887px;width:241px;height:45px;border-radius:8px;background:#0a0a0a;border:1px solid #262626"></div>
<div style="left:857px;top:901px;width:16px;height:16px;border-radius:2px;border:1.5px solid #a3a3a3"></div>
<div class="t m" style="left:884px;top:899px;color:#d4d4d4">Select all</div>
<div style="left:956px;top:899px;width:1px;height:20px;background:#262626"></div>
<div class="t" style="left:969px;top:899px;color:#a3a3a3;letter-spacing:.1px">None selected</div>

<!-- overlay -->
<div style="left:0;top:0;width:1905px;height:956px;background:rgba(0,0,0,.8)"></div>

<!-- modal -->
<div style="left:624px;top:197px;width:672px;height:561px;background:#0a0a0a;border:1px solid #262626;border-radius:8px;box-shadow:0 8px 20px rgba(0,0,0,.4)"></div>
<div style="left:625px;top:270px;width:670px;height:1px;background:#262626"></div>
<div class="t" style="left:641px;top:222.5px;line-height:24px;font-size:20.6px;-webkit-text-stroke:.6px #fafafa">Jeans</div>
<div style="left:884px;top:211px;width:47px;height:47px;border-radius:9px;border:2px solid #cfcfcf;box-shadow:inset 0 0 0 1px #0a0a0a,inset 0 0 0 2px #333"></div>
<svg class="i" style="left:897px;top:224px;color:#bdbdbd" width="20" height="20"><use href="#heart"/></svg>
<svg class="i" style="left:941px;top:224px" width="20" height="20"><use href="#layers"/></svg>
<svg class="i" style="left:985px;top:224px" width="20" height="20"><use href="#scan"/></svg>
<svg class="i" style="left:1029px;top:224px" width="20" height="20"><use href="#refresh"/></svg>
<svg class="i" style="left:1073px;top:224px" width="20" height="20"><use href="#ccw"/></svg>
<svg class="i" style="left:1117px;top:224px" width="20" height="20"><use href="#cw"/></svg>
<svg class="i" style="left:1161px;top:224px" width="20" height="20"><use href="#eraser"/></svg>
<svg class="i" style="left:1205px;top:224px" width="20" height="20"><use href="#pencil"/></svg>
<svg class="i" style="left:1249px;top:224px" width="20" height="20"><use href="#x"/></svg>

<div style="left:649px;top:304px;width:299px;height:299px;border-radius:8px;overflow:hidden;background:#e0e5e9"><svg style="position:absolute;left:0;top:0" width="299" height="299"><use href="#g-jeans" width="299" height="299"/></svg></div>

<svg class="i" style="left:972px;top:306px;color:#d4d4d4" width="16" height="16"><use href="#shirt"/></svg>
<div class="t m" style="left:996px;top:304px;letter-spacing:.1px">Jeans</div>
<svg class="i" style="left:972px;top:334px;color:#d4d4d4" width="16" height="16"><use href="#palette"/></svg>
<div style="left:996px;top:334px;width:16px;height:16px;border-radius:50%;background:#808080;border:1px solid #262626"></div>
<div class="t" style="left:1020px;top:332px;color:#e5e5e5">Gray</div>
<div style="left:972px;top:368px;width:299px;height:1px;background:#262626"></div>

<svg class="i" style="left:972px;top:383px;color:#d4d4d4" width="16" height="16"><use href="#drops"/></svg>
<div class="t m" style="left:996px;top:381px">Wash Status</div>
<div class="box" style="left:1150px;top:377px;width:121px;height:28px"></div>
<svg class="i" style="left:1163px;top:385px" width="12" height="12"><use href="#drops"/></svg>
<div class="s m" style="left:1179px;top:383px;font-size:12.6px;letter-spacing:.12px">Mark Washed</div>
<div class="s" style="left:972px;top:413px;color:#a3a3a3;letter-spacing:.12px">Wears since wash: 0/6</div>
<div style="left:972px;top:435px;width:299px;height:8px;border-radius:4px;background:#262626"></div>
<div style="left:972px;top:459px;width:299px;height:1px;background:#262626"></div>

<svg class="i" style="left:972px;top:471px" width="16" height="16"><use href="#spark"/></svg>
<div class="t m" style="left:996px;top:469px;letter-spacing:.05px">AI Analysis</div>
<div style="left:1078px;top:468px;width:107px;height:22px;border-radius:11px;background:#262626;text-align:center;font-weight:bold;font-size:12.3px;line-height:22px;letter-spacing:.1px">84% complete</div>
<div class="t" style="left:972px;top:498px;font-style:italic;color:#a3a3a3;letter-spacing:.12px">"These are wide-leg, dark gray jeans with a</div>
<div class="t" style="left:972px;top:518px;font-style:italic;color:#a3a3a3;letter-spacing:.12px">distinctive, frayed, and split hem."</div>

<div class="tag" style="left:972px;top:546px;width:48px">gray</div>
<div class="tag" style="left:1026px;top:546px;width:50px">solid</div>
<div class="tag" style="left:1082px;top:546px;width:57px">denim</div>
<div class="tag" style="left:1145px;top:546px;width:60px">casual</div>
<div class="tag" style="left:972px;top:574px;width:85px">streetwear</div>
<div class="tag" style="left:1063px;top:574px;width:82px">all-season</div>
<div class="tag" style="left:1151px;top:574px;width:60px">casual</div>
<div class="tag" style="left:972px;top:602px;width:80px">relaxed fit</div>

<div style="left:972px;top:640px;width:299px;height:1px;background:#262626"></div>
<div class="s" style="left:972px;top:649px;color:#a3a3a3;letter-spacing:.3px">Added 3/30/2026</div>
<div style="left:649px;top:681px;width:622px;height:1px;background:#262626"></div>
<svg class="i" style="left:661px;top:708px;color:#7f1d1d" width="16" height="16"><use href="#trash"/></svg>
<div class="t m" style="left:685px;top:706px;color:#861c1c;letter-spacing:.1px">Delete this item</div>
</body></html>
